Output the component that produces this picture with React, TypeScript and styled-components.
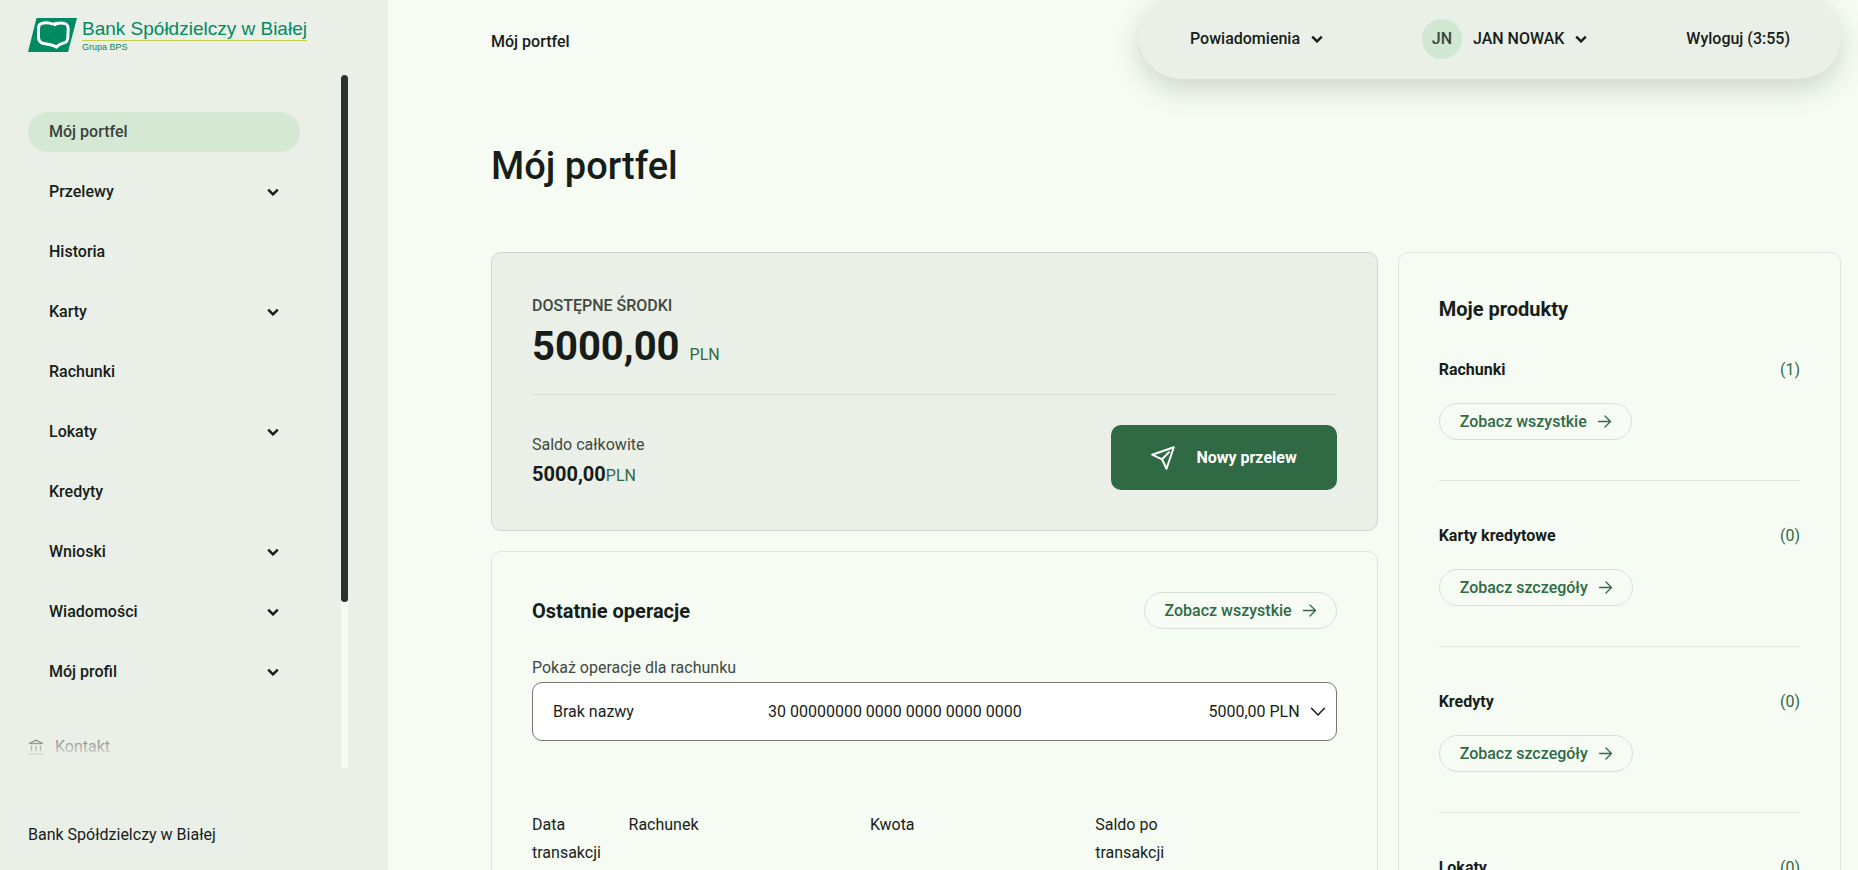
import React from "react";
import styled, { createGlobalStyle, css } from "styled-components";

const GlobalStyle = createGlobalStyle`
  *, *::before, *::after { box-sizing: border-box; }
  body {
    margin: 0;
    background: #f6fcf4;
    color: #171d19;
    font-family: Roboto, sans-serif;
    font-size: 16px;
    line-height: 24px;
  }
  h1, h2, h3, p, ul { margin: 0; padding: 0; }
  ul { list-style: none; }
  button { font: inherit; color: inherit; border: 0; background: none; padding: 0; cursor: pointer; }
  a { color: inherit; text-decoration: none; }
`;

const Page = styled.div`
  display: flex;
  height: 100vh;
  overflow: hidden;
`;

const Sidebar = styled.aside`
  flex: 0 0 388px;
  display: flex;
  flex-direction: column;
  padding-left: 28px;
  background: #eaefe7;
`;

const LogoLink = styled.a`
  display: flex;
  padding-top: 17px;
  height: 75px;
`;

const LogoWords = styled.span`
  display: flex;
  flex-direction: column;
  margin-left: 4px;
  font-family: "Liberation Sans", Arial, sans-serif;
  color: #008a62;
`;

const LogoName = styled.span`
  font-size: 19px;
  line-height: 23px;
  border-bottom: 1px solid #c3d04a;
  white-space: nowrap;
`;

const LogoGroup = styled.span`
  font-size: 9px;
  line-height: 13px;
`;

const NavScroll = styled.div`
  display: flex;
  flex: 1;
  min-height: 0;
  margin-right: 40px;
`;

const Nav = styled.nav`
  position: relative;
  flex: 1;
  overflow: hidden;
  padding: 37px 41px 0 0;
  &::after {
    content: "";
    position: absolute;
    left: 0;
    right: 0;
    bottom: 0;
    height: 48px;
    background: linear-gradient(rgba(234, 239, 231, 0), #eaefe7 80%);
  }
`;

const NavList = styled.ul`
  display: flex;
  flex-direction: column;
  gap: 20px;
`;

const NavItem = styled.a<{ $active?: boolean }>`
  display: flex;
  align-items: center;
  justify-content: space-between;
  height: 40px;
  padding: 0 21px;
  border-radius: 20px;
  font-weight: 500;
  ${(p) => p.$active && css`background: #d5e8d4; color: #3a443c;`}
`;

const ContactLink = styled.a`
  display: flex;
  align-items: center;
  gap: 11px;
  height: 40px;
  margin-top: 35px;
`;

const ScrollTrack = styled.div`
  width: 7px;
  background: #f6fcf4;
`;

const ScrollThumb = styled.div`
  height: 76%;
  border-radius: 4px;
  background: #2c322d;
`;

const BankName = styled.p`
  height: 102px;
  padding-top: 55px;
`;

const Main = styled.main`
  flex: 1;
  min-width: 0;
  overflow-y: auto;
  scrollbar-width: none;
  padding: 0 17px 40px 103px;
`;

const TopBar = styled.header`
  display: flex;
  justify-content: space-between;
`;

const Crumb = styled.span`
  padding-top: 30px;
  font-weight: 500;
`;

const UserBar = styled.div`
  display: flex;
  align-items: center;
  justify-content: space-between;
  width: 702px;
  height: 84px;
  margin-top: -5px;
  padding: 4px 51px 0;
  border-radius: 42px;
  background: #eaefe7;
  box-shadow: 0 10px 28px rgba(50, 55, 40, 0.2);
  font-weight: 500;
`;

const BarButton = styled.button`
  display: flex;
  align-items: center;
  gap: 11px;
  font-weight: 500;
`;

const Avatar = styled.span`
  display: grid;
  place-items: center;
  width: 40px;
  height: 40px;
  border-radius: 50%;
  background: #d0e8d2;
  color: #3a443c;
`;

const PageTitle = styled.h1`
  padding: 64px 0 62px;
  font-size: 38px;
  line-height: 47px;
  font-weight: 500;
`;

const Columns = styled.div`
  display: grid;
  grid-template-columns: minmax(0, 2fr) minmax(0, 1fr);
  gap: 20px;
`;

const Stack = styled.div`
  display: flex;
  flex-direction: column;
  gap: 20px;
`;

const Card = styled.section<{ $filled?: boolean }>`
  padding: 40px;
  border: 1px solid ${(p) => (p.$filled ? "#cfd6ce" : "#dee5dc")};
  border-radius: 10px;
  background: ${(p) => (p.$filled ? "#eaefe7" : "transparent")};
`;

const FundsLabel = styled.h2`
  font-size: 16px;
  line-height: 26px;
  font-weight: 500;
  color: #414942;
`;

const Funds = styled.p`
  display: flex;
  align-items: baseline;
  gap: 10px;
  padding-bottom: 19px;
  border-bottom: 1px solid #d5dcd4;
`;

const FundsValue = styled.strong`
  font-size: 40px;
  line-height: 56px;
  font-weight: 700;
`;

const Currency = styled.span`
  color: #2f6a45;
`;

const BalanceRow = styled.div`
  display: flex;
  align-items: flex-end;
  justify-content: space-between;
  padding-top: 30px;
`;

const Muted = styled.p`
  line-height: 30px;
  color: #414942;
`;

const Balance = styled.p`
  display: flex;
  align-items: baseline;
  line-height: 28px;
`;

const BalanceValue = styled.strong`
  font-size: 20px;
`;

const TransferButton = styled.button`
  display: flex;
  align-items: center;
  gap: 21px;
  height: 65px;
  padding: 0 40px;
  border-radius: 10px;
  background: #2f6a45;
  color: #fff;
  font-weight: 700;
`;

const CardHead = styled.div`
  display: flex;
  align-items: center;
  justify-content: space-between;
`;

const CardTitle = styled.h2`
  font-size: 20px;
  line-height: 32px;
  font-weight: 700;
`;

const PillLink = styled.a`
  display: inline-flex;
  align-items: center;
  gap: 11px;
  height: 37px;
  padding: 0 20px;
  border: 1px solid #d3e2d3;
  border-radius: 19px;
  color: #2f6a45;
  font-weight: 500;
`;

const AccountField = styled.div`
  display: flex;
  flex-direction: column;
  margin-top: 24px;
`;

const FieldLabel = styled.span`
  line-height: 29px;
  color: #414942;
`;

const AccountButton = styled.button`
  display: grid;
  grid-template-columns: 205px 1fr auto 16px;
  align-items: center;
  column-gap: 10px;
  height: 59px;
  padding: 0 10px 0 20px;
  border: 1px solid #717971;
  border-radius: 10px;
  background: #fff;
  text-align: left;
`;

const OperationsTable = styled.table`
  width: 100%;
  margin-top: 70px;
  border-collapse: collapse;
  table-layout: fixed;
  line-height: 28px;
`;

const HeadCell = styled.th<{ $width?: string }>`
  width: ${(p) => p.$width ?? "auto"};
  padding: 0 20px 0 0;
  text-align: left;
  vertical-align: top;
  font-weight: 400;
`;

const ProductsTitle = styled(CardTitle)`
  margin-bottom: 31px;
`;

const Product = styled.article`
  margin-bottom: 41px;
  padding-bottom: 40px;
  border-bottom: 1px solid #e0e8df;
`;

const ProductHead = styled.div`
  display: flex;
  align-items: center;
  justify-content: space-between;
  margin-bottom: 20px;
  line-height: 27px;
`;

const ProductName = styled.h3`
  font-size: 16px;
  font-weight: 700;
`;

const Count = styled.span`
  color: #2f6a45;
`;

const Chevron = () => (
  <svg width="12" height="8" viewBox="0 0 12 8" fill="none" aria-hidden="true">
    <path d="M1.2 1.600 6 6.400l4.800-4.800" stroke="currentColor" strokeWidth="2.400" />
  </svg>
);

const ThinChevron = () => (
  <svg width="16" height="10" viewBox="0 0 16 10" fill="none" aria-hidden="true">
    <path d="M1.500 1.200 8 8l6.500-6.800" stroke="currentColor" strokeWidth="1.500" strokeLinecap="round" />
  </svg>
);

const Arrow = () => (
  <svg width="13" height="13" viewBox="0 0 13 13" fill="none" aria-hidden="true">
    <path d="M.5 6.500h12M7 1l5.500 5.500L7 12" stroke="currentColor" strokeWidth="1.300" strokeLinecap="round" strokeLinejoin="round" />
  </svg>
);

const Plane = () => (
  <svg width="24" height="24" viewBox="0 0 24 24" fill="none" aria-hidden="true">
    <path d="M1.200 8.700 22.800 1.200 15.500 22.800 11 13.300z M11 13.300l7-7" stroke="currentColor" strokeWidth="2" strokeLinecap="round" strokeLinejoin="round" />
  </svg>
);

const BankIcon = () => (
  <svg width="16" height="16" viewBox="0 0 16 16" fill="none" aria-hidden="true">
    <path d="M1 4.500 8 1.200l7 3.300z" stroke="currentColor" strokeWidth="1.300" />
    <path d="M3.500 7v5.500M8 7v5.500M12.500 7v5.500M.8 15h14.400" stroke="currentColor" strokeWidth="1.300" />
  </svg>
);

const LogoMark = () => (
  <svg width="50" height="36" viewBox="0 0 50 36" aria-hidden="true">
    <path d="M8.500 1H49l-9 34H0z" fill="#008a62" />
    <path
      d="M25 7.200C21 5.400 16 5.500 12.700 6.800c-2.300.9-2.200 3.200-2.200 7.200v6c0 4.500 2 6 5.500 6.600 5 .7 9 1.400 12.200 3.500 2.300-2.400 4.800-3.500 7.800-4.200 3.200-.8 3.700-2.400 3.800-5.900l.4-8c.1-4.500-1.700-5.400-5.200-5.800-4-.4-6.500.1-9.500 2"
      fill="none"
      stroke="#fff"
      strokeWidth="3"
    />
    <path d="M23.500 7.600l5-2.600" stroke="#fff" strokeWidth="1.300" />
  </svg>
);

const navItems = [
  { label: "Mój portfel", active: true },
  { label: "Przelewy", expandable: true },
  { label: "Historia" },
  { label: "Karty", expandable: true },
  { label: "Rachunki" },
  { label: "Lokaty", expandable: true },
  { label: "Kredyty" },
  { label: "Wnioski", expandable: true },
  { label: "Wiadomości", expandable: true },
  { label: "Mój profil", expandable: true },
];

const products = [
  { name: "Rachunki", count: 1, action: "Zobacz wszystkie" },
  { name: "Karty kredytowe", count: 0, action: "Zobacz szczegóły" },
  { name: "Kredyty", count: 0, action: "Zobacz szczegóły" },
  { name: "Lokaty", count: 0, action: "Zobacz szczegóły" },
];

export default function App() {
  return (
    <>
      <GlobalStyle />
      <Page>
        <Sidebar>
          <LogoLink href="#">
            <LogoMark />
            <LogoWords>
              <LogoName>Bank Spółdzielczy w Białej</LogoName>
              <LogoGroup>Grupa BPS</LogoGroup>
            </LogoWords>
          </LogoLink>
          <NavScroll>
            <Nav>
              <NavList>
                {navItems.map((item) => (
                  <li key={item.label}>
                    <NavItem href="#" $active={item.active}>
                      {item.label}
                      {item.expandable && <Chevron />}
                    </NavItem>
                  </li>
                ))}
              </NavList>
              <ContactLink href="#">
                <BankIcon />
                Kontakt
              </ContactLink>
            </Nav>
            <ScrollTrack>
              <ScrollThumb />
            </ScrollTrack>
          </NavScroll>
          <BankName>Bank Spółdzielczy w Białej</BankName>
        </Sidebar>
        <Main>
          <TopBar>
            <Crumb>Mój portfel</Crumb>
            <UserBar>
              <BarButton>
                Powiadomienia
                <Chevron />
              </BarButton>
              <BarButton>
                <Avatar>JN</Avatar>
                JAN NOWAK
                <Chevron />
              </BarButton>
              <BarButton>Wyloguj (3:55)</BarButton>
            </UserBar>
          </TopBar>
          <PageTitle>Mój portfel</PageTitle>
          <Columns>
            <Stack>
              <Card $filled>
                <FundsLabel>DOSTĘPNE ŚRODKI</FundsLabel>
                <Funds>
                  <FundsValue>5000,00</FundsValue>
                  <Currency>PLN</Currency>
                </Funds>
                <BalanceRow>
                  <div>
                    <Muted>Saldo całkowite</Muted>
                    <Balance>
                      <BalanceValue>5000,00</BalanceValue>
                      <Currency>PLN</Currency>
                    </Balance>
                  </div>
                  <TransferButton>
                    <Plane />
                    Nowy przelew
                  </TransferButton>
                </BalanceRow>
              </Card>
              <Card>
                <CardHead>
                  <CardTitle>Ostatnie operacje</CardTitle>
                  <PillLink href="#">
                    Zobacz wszystkie
                    <Arrow />
                  </PillLink>
                </CardHead>
                <AccountField>
                  <FieldLabel id="account-label">Pokaż operacje dla rachunku</FieldLabel>
                  <AccountButton aria-labelledby="account-label" aria-haspopup="listbox">
                    <span>Brak nazwy</span>
                    <span>30 00000000 0000 0000 0000 0000</span>
                    <span>5000,00 PLN</span>
                    <ThinChevron />
                  </AccountButton>
                </AccountField>
                <OperationsTable>
                  <thead>
                    <tr>
                      <HeadCell $width="12%">Data transakcji</HeadCell>
                      <HeadCell $width="30%">Rachunek</HeadCell>
                      <HeadCell $width="28%">Kwota</HeadCell>
                      <HeadCell $width="13%">Saldo po transakcji</HeadCell>
                      <HeadCell />
                    </tr>
                  </thead>
                </OperationsTable>
              </Card>
            </Stack>
            <Card>
              <ProductsTitle>Moje produkty</ProductsTitle>
              {products.map((product) => (
                <Product key={product.name}>
                  <ProductHead>
                    <ProductName>{product.name}</ProductName>
                    <Count>({product.count})</Count>
                  </ProductHead>
                  <PillLink href="#">
                    {product.action}
                    <Arrow />
                  </PillLink>
                </Product>
              ))}
            </Card>
          </Columns>
        </Main>
      </Page>
    </>
  );
}
